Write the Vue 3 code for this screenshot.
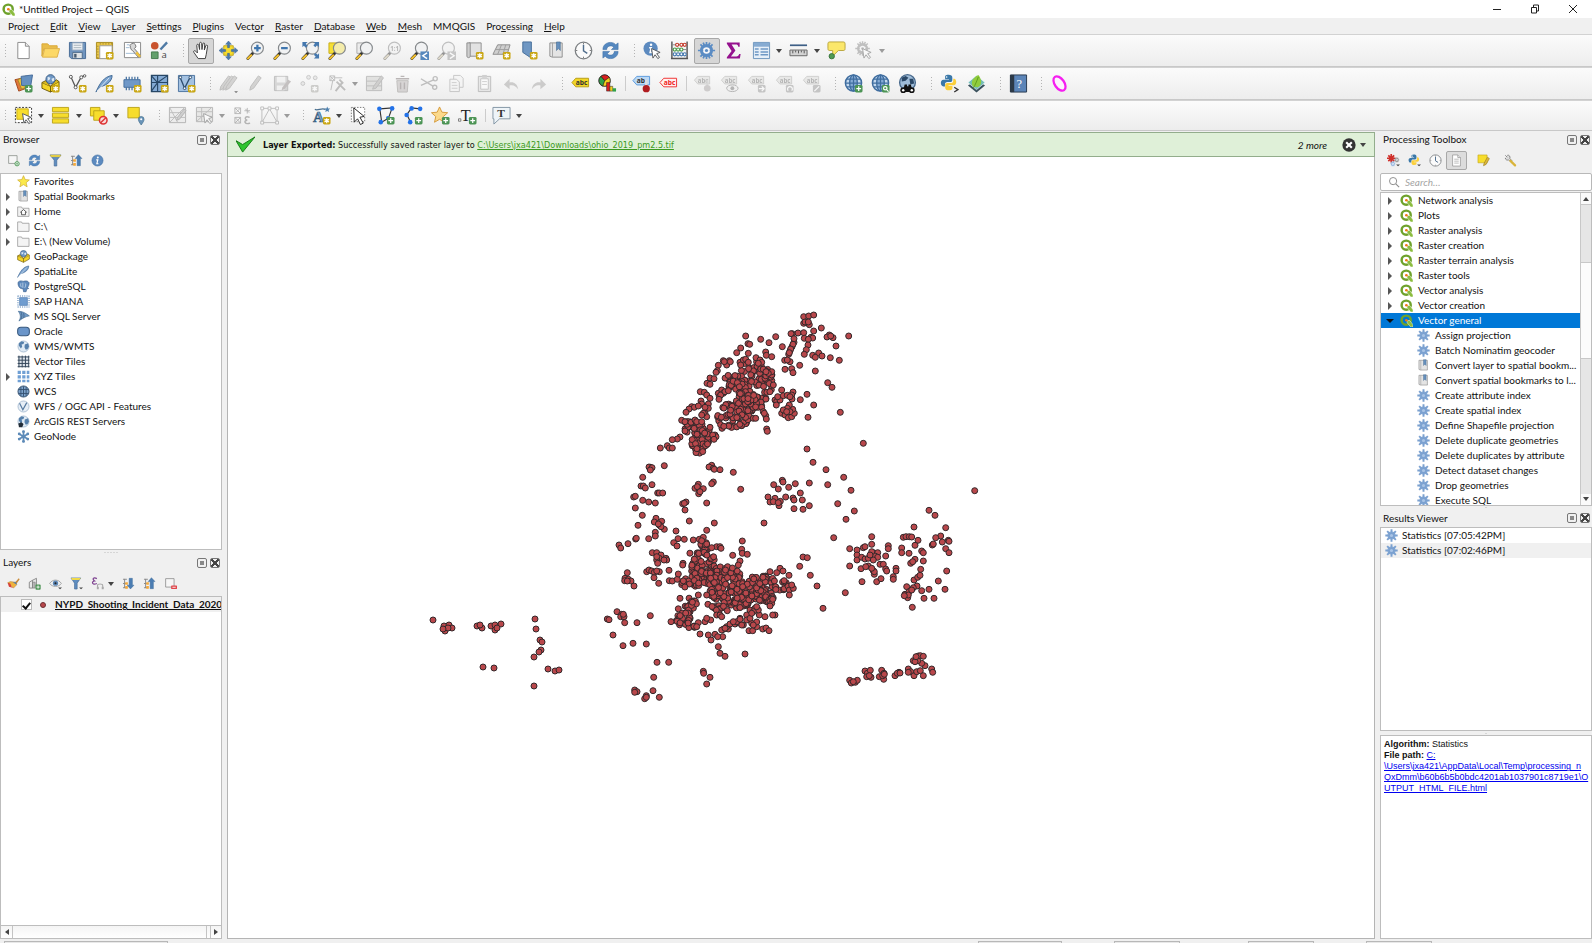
<script setup>
import { ref } from 'vue'

const badge = (fill, mark) =>
  `<g transform="translate(11 11)"><rect x=".5" y=".5" width="8" height="8" rx="1.5" fill="${fill}"/><path d="${mark}" stroke="#fff" stroke-width="1.3" fill="none"/></g>`
const star = badge('#c9a613', 'M4.5 1.8v5.4M2.1 3.1l4.8 2.8M6.9 3.1L2.1 5.9')
const plus = badge('#4c9455', 'M4.5 2v5M2 4.5h5')
const lens = (inner = '', glass = '#f1f2f3') =>
  `<path d="M7.5 12.5L2 18.5" stroke="#333" stroke-width="3" stroke-linecap="round"/><path d="M5.5 15L2 18.5" stroke="#f0bd2c" stroke-width="2.2" stroke-linecap="round"/><circle cx="12" cy="7.5" r="6.3" fill="${glass}" stroke="#85898c" stroke-width="1.2"/>${inner}`
const gear = (c, x = 10, y = 10, s = 1) =>
  `<g transform="translate(${x} ${y}) scale(${s})"><circle r="5.4" fill="none" stroke="${c}" stroke-width="3"/><path d="M0-9V9M-9 0H9M-6.4-6.4L6.4 6.4M6.4-6.4L-6.4 6.4M-3.5-8.3L3.5 8.3M3.5-8.3L-3.5 8.3" stroke="${c}" stroke-width="1.8"/><circle r="3.4" fill="#f4f6fa"/><circle r="1.7" fill="${c}"/></g>`
const cursor = '<path d="M9 8l9 4-3.6 1.3 3 4-1.8 1.2-2.9-4L10.500 18z" fill="#fff" stroke="#55595c" stroke-width="1"/>'
const page = '<path d="M4 1.500h8l4 4v13H4z" fill="#fff" stroke="#8a8a8a"/><path d="M12 1.500v4h4" fill="#eee" stroke="#8a8a8a"/>'
const python = '<path d="M10 1c-4 0-4 1.500-4 3v2h4.500v.8H4C2 6.800 1 8.500 1 10.500s1 4 3 4h1.800v-2.400c0-1.600 1-2.700 2.700-2.700H12c1.500 0 2.400-1 2.400-2.400V4c0-2-1.500-3-4.400-3z" fill="#3a78a8"/><path d="M10.500 19c4 0 4-1.500 4-3v-2H10v-.8h6c2 0 3-1.700 3-3.700s-1-4-2.500-4h-1v2.300c0 1.600-1 2.700-2.700 2.700H8.500c-1.500 0-2.400 1-2.400 2.400V16c0 2 1.500 3 4.400 3z" fill="#fbcf3a"/><circle cx="7.800" cy="3.600" r=".9" fill="#fff"/>'
const globe = (c = '#3f6d9f') =>
  `<circle cx="10" cy="9.500" r="8.500" fill="#c3d8ee" stroke="${c}" stroke-width="1.600"/><ellipse cx="10" cy="9.500" rx="4" ry="8.500" fill="#86acd6" stroke="${c}" stroke-width="1.400"/><path d="M1.500 9.500h17M2.800 5.500h14.400M2.800 13.500h14.400M10 1v17" stroke="${c}" stroke-width="1.300"/>`
const land = '<circle cx="10" cy="10" r="8.500" fill="#dfeaf4" stroke="#8fa9c2"/><path d="M3 5l4-3 4 1-1 3-3 1 1 3-2 3-3-4zM12 7l5-2 1.500 5-2 4-3 1-2-4z" fill="#5680ab"/>'
const tag = (text, bg, line, fg) =>
  `<path d="M5 4.500h13.500v9H5l-4-4.500z" fill="${bg}" stroke="${line}"/><text x="5" y="11.500" font-family="Open Sans, sans-serif" font-size="7" font-weight="700" fill="${fg}">${text}</text>`
const fadedTag = '<path d="M5 2.500h12.500v8H5L1.500 6.500z" fill="#dcdccf" stroke="#aaaa9f"/><text x="5" y="9" font-family="Open Sans, sans-serif" font-size="6.500" font-weight="700" fill="#777">abc</text>'
const book = '<path d="M3 2h13v15H5.500L3 16z" fill="#e4e4e4" stroke="#8f8f8f"/><path d="M5.800 2v15" stroke="#a5a5a5"/>'
const pencil = (dx = 0) => `<path d="M${4 + dx} 17l1-4 8-11 3 2-8 11z" fill="#b5b2a8" stroke="#8d8a84"/>`
const boxPkg = '<path d="M1 9l9 4 9-5v6l-9 5-9-4z" fill="#f4d426" stroke="#6f5b0c"/><path d="M10 13v6M1 9l4-2 5 6M19 8l-3-2-6 7" fill="#d8b91f" stroke="#6f5b0c"/><circle cx="10" cy="5.500" r="4.800" fill="#6f97c4" stroke="#395d86"/><path d="M7 3l3 1-1 2-2 1zM11 5l3-1 0 3-2 1z" fill="#dce8f4"/>'
const feather = '<path d="M1 19C5 10 9 3 18 1.500c0 6-5 10-12.500 12z" fill="#7aa2cf" stroke="#3f6894"/><path d="M2 18L15 4" stroke="#dce9f5"/>'
const qlogo = '<circle cx="9.500" cy="9.500" r="7" fill="none" stroke="#6fa22c" stroke-width="3.800"/><path d="M11 10h4l5 6.500V20h-3.500L11 13.500z" fill="#8cbd3f" stroke="#fff" stroke-width=".7"/><circle cx="9.800" cy="9.600" r="2.100" fill="#ee7913"/>'
const redo = '<path d="M3 16c1-6 5-8 9-7V5l6 6-6 5v-4c-4-1-7 1-9 4z" fill="#a9a49c"/>'
const bars = '<path d="M1.500 3.500h6M1.500 10h6M1.500 16.500h6M4 3v14" stroke="#8a8a8a" stroke-width="1.500"/><path d="M5 8h4v4H5zM5 14h4v4H5z" fill="#f5a93a"/>'

const icons = {
  qgis: qlogo,
  new: page,
  open: '<path d="M1 3h6l2 2h8v3H3l-2 8z" fill="#e9bd4a" stroke="#d9a838"/><path d="M4 8h15.500L17 17H1.500z" fill="#fcd867" stroke="#ddb048"/>',
  save: '<path d="M1.500 1.500h17v17h-15l-2-2z" fill="#6f94bf" stroke="#486c96"/><path d="M4.500 2h11v7.500h-11z" fill="#eef1f4" stroke="#9fb0c2"/><path d="M6 4.500h8M6 7h8" stroke="#a8b3bd"/><path d="M5 12h10v6.500H5z" fill="#dfe3e6" stroke="#4d6a8a"/><path d="M6.500 13.500h2.500v4h-2.500z" fill="#475b70"/>',
  layout: '<path d="M1.500 1.500h17v17h-17z" fill="#e8c548" stroke="#a88a1f"/><path d="M5 5h13v13.500H5z" fill="#fff" stroke="#9c9c9c"/><path d="M3 5v13M5 3h13" stroke="#8c7420" stroke-dasharray="1 2"/>' + star,
  manager: '<path d="M1.500 1.500h17v16h-17z" fill="#fff" stroke="#888"/><path d="M3 13h12M4 4h3M3 7h4" stroke="#9db9d4"/><path d="M8 7a3 3 0 1 1 4 1l6 7-2 2-6-7a3 3 0 0 1-2-3z" fill="#d8d8d8" stroke="#777"/><path d="M14 12l4 4.500" stroke="#f0c23a" stroke-width="2.500"/>',
  style: '<circle cx="5" cy="5" r="4" fill="#c9532d"/><path d="M11 9l7-7.500" stroke="#4f7aa5" stroke-width="2.500"/><path d="M1.500 11.500h7v7h-7z" fill="#62a06b" stroke="#447a4d"/><text x="12" y="18" font-family="Open Sans, sans-serif" font-size="10" fill="#444">a</text>',
  hand: '<path d="M6.500 18.500L2 12c-1-1.500.8-2.500 2-1.200l1.700 1.800L5 4.500c0-1.400 1.900-1.400 2.100 0L8 9V2.500c0-1.500 2-1.500 2.100 0L10.500 9l.9-6c.2-1.300 2-1.200 2 .2L13 9.500l1.500-4.500c.5-1.200 2.100-.8 1.900.5L15 14l-1 4.500z" fill="#fff" stroke="#3c3c3c"/>',
  pan: '<path d="M5 5h10v10H5z" fill="#f6dc2e" stroke="#c0a51a"/><path d="M10 0l3 3.500h-2v3.500H9V3.500H7zM10 20l3-3.500h-2V13H9v3.500H7zM0 10l3.500-3v2H7v2H3.500v2zM20 10l-3.500-3v2H13v2h3.500v2z" fill="#4b7bb0" stroke="#34608f" stroke-width=".5"/>',
  zin: lens('<path d="M12 4v7M8.500 7.500h7" stroke="#3f76ae" stroke-width="2.400"/>'),
  zout: lens('<path d="M8.500 7.500h7" stroke="#3f76ae" stroke-width="2.400"/>'),
  full: lens() + '<path d="M1.500 1h5.500l-2 2 2 2-2 2-2-2-1.500 1.500zM19 1v5.500l-2-2-2 2-2-2 2-2L13.500 1zM19 18.500h-5.500l2-2-2-2 2-2 2 2 1.500-1.500z" fill="#4578ae"/>',
  zsel: '<path d="M1 2h12v11H1z" fill="#f6df33" stroke="#c7ad1b"/>' + lens('', '#f4ecaa'),
  zlay: '<path d="M2 2h11v11H2z" fill="#ececec" stroke="#aaa"/>' + lens(),
  znat: lens('<text x="7.500" y="10" font-family="Open Sans, sans-serif" font-size="6.500" font-weight="700" fill="#777">1:1</text>'),
  zlast: lens() + '<rect x="11" y="11" width="9" height="9" fill="#5688bd"/><path d="M18 12.500l-4.500 3 4.500 3" stroke="#fff" stroke-width="1.500" fill="none"/>',
  znext: lens() + '<rect x="11" y="11" width="9" height="9" fill="#9a9a9a"/><path d="M13.500 12.500l4.500 3-4.500 3" stroke="#fff" stroke-width="1.500" fill="none"/>',
  map: '<path d="M4 2h13v14H4z" fill="#e2e2e2" stroke="#8d8d8d"/><path d="M2 2h3.500v14c0 2-3.500 2-3.500 0z" fill="#cfcfcf" stroke="#8d8d8d"/>' + star,
  map3d: '<path d="M6 4h13l-3 10H1z" fill="#cfcfcf" stroke="#8d8d8d"/><path d="M4 9h13M10 4L6 14M14.500 4l-3 10" stroke="#9d9d9d" fill="none"/>' + star,
  bookmark: '<path d="M4 1h9v17l-4.500-3L4 12z" fill="#6f97c3" stroke="#436d99"/>' + star,
  bookmarks: book + '<path d="M10 1h4v9l-2-2-2 2z" fill="#6690bd" stroke="#41698f" stroke-width=".6"/>',
  clock: '<circle cx="10" cy="10" r="8.700" fill="#fbfbfb" stroke="#7b7f82" stroke-width="1.300"/><path d="M10 4v6.500l4 2.500" stroke="#4f6d8c" stroke-width="1.500" fill="none"/><path d="M10 2v1.500M10 16.500V18M2 10h1.500M16.500 10H18" stroke="#777"/>',
  refresh: '<path d="M2 9C2 4 6 1.500 10 1.500c2.500 0 4.500 1 5.500 2.500L18 2v7h-7l2.500-2.500C11 4 6 5 6 9zM18 11c0 5-4 7.500-8 7.500-2.500 0-4.500-1-5.500-2.500L2 18v-7h7l-2.500 2.500C9 16 14 15 14 11z" fill="#5588c0" stroke="#3c6da5" stroke-width=".6"/>',
  info: '<circle cx="8" cy="8" r="7.500" fill="#5c8abf"/><circle cx="8.500" cy="4" r="1.300" fill="#fff"/><path d="M6.500 7h2.200L7.500 12h2" stroke="#fff" stroke-width="1.600" fill="none"/>' + cursor,
  infoOnly: '<circle cx="10" cy="10" r="8.500" fill="#5c8abf" stroke="#4472a5"/><circle cx="10.500" cy="5.500" r="1.500" fill="#fff"/><path d="M8 9h2.500L9 15h2.500" stroke="#fff" stroke-width="1.800" fill="none"/>',
  abacus: '<path d="M2 .5v18M18 .5v18M1 18.500h18" stroke="#555" stroke-width="1.500"/><path d="M2 4h16M2 9h16M2 14h16" stroke="#888"/><g fill="#fff" stroke-width="1.200"><g stroke="#c33b2c"><circle cx="7.500" cy="4" r="1.600"/><circle cx="12" cy="4" r="1.600"/><circle cx="15.500" cy="4" r="1.600"/></g><g stroke="#4c9c4a"><circle cx="5" cy="9" r="1.600"/><circle cx="8.500" cy="9" r="1.600"/><circle cx="12" cy="9" r="1.600"/></g><g stroke="#4478ae"><circle cx="5" cy="14" r="1.600"/><circle cx="8.500" cy="14" r="1.600"/><circle cx="12" cy="14" r="1.600"/><circle cx="15.500" cy="14" r="1.600"/></g></g>',
  gear: gear('#5b8cc4'),
  algo: '<circle cx="10" cy="10" r="6.300" fill="#8aadda"/><path d="M10 .5v19M.5 10h19M3.300 3.300l13.400 13.400M16.700 3.300L3.300 16.700" stroke="#7ba1d0" stroke-width="3"/><circle cx="10" cy="10" r="2.400" fill="#a9c4e6"/>',
  sigma: '<path d="M3 1.500h13.500V6h-1.500c-.3-1.700-1-2.200-2.500-2.200H8L12 10l-4.700 6.200H13c1.700 0 2.500-.7 3-2.500h1.500l-.8 4.800H3V17l5-6.600L3 3z" fill="#95118e"/>',
  table: '<path d="M1.500 1.500h17v17h-17z" fill="#e6eff8" stroke="#6b93bd"/><path d="M2 2h16v4H2z" fill="#86abd2"/><path d="M3 8.500h4M3 11.500h4M3 14.500h4M9 8.500h8M9 11.500h8M9 14.500h8" stroke="#6f99c5" stroke-width="1.500"/>',
  ruler: '<path d="M1 4.500h18" stroke="#3e5f86" stroke-width="1.800"/><path d="M1 9.500h18v6H1z" fill="#d3d3d3" stroke="#666"/><path d="M4 10v3M7 10v2M10 10v3M13 10v2M16 10v3" stroke="#555"/>',
  tip: '<path d="M3 1h14c1.500 0 2 .5 2 2v5c0 1.500-.5 2-2 2h-5l-6 6v-6H3c-1.500 0-2-.5-2-2V3c0-1.500.5-2 2-2z" fill="#fbe76b" stroke="#b9a53d"/><circle cx="5" cy="16" r="2.800" fill="#4f9a53" stroke="#39743d"/>',
  actions: gear('#8a8a8a', 9, 8, 0.85) + cursor,
  source: '<path d="M1 6l9-2 3 11-8 3z" fill="#e0763a" stroke="#a1461b"/><path d="M4 6l9-4 4 10-9 4z" fill="#edc13b" stroke="#a8862a"/><path d="M7.500 2.500l12-1.500-2 12-9.500-1z" fill="#6590c0" stroke="#42699a"/>' + plus,
  gpkg: boxPkg + star, box: boxPkg,
  shape: '<path d="M3 3l5 11L14 3l3-1" stroke="#555" stroke-width="1.300" fill="none"/><g fill="#fff" stroke="#555"><circle cx="3" cy="3" r="1.600"/><circle cx="14" cy="3.500" r="1.600"/><circle cx="17.500" cy="2" r="1.300"/><circle cx="8" cy="14" r="1.600"/></g>' + star,
  spatial: feather + star, feather,
  memory: '<path d="M1 6h17v8H1z" fill="#6f98c8" stroke="#44709f"/><path d="M3.500 3v3M6.500 3v3M9.500 3v3M12.500 3v3M15.500 3v3M3.500 14v3M6.500 14v3M9.500 14v3" stroke="#44709f" stroke-width="1.300"/>' + star,
  mesh: '<path d="M1.500 1.500h17v17h-17z" fill="#84aad4" stroke="#284766" stroke-width="1.300"/><path d="M8 1.500v17M1.500 9h17M8 9l10-7M1.500 18L8 9M1.500 2L8 9" stroke="#284766" stroke-width="1.200" fill="none"/>' + star,
  virtual: '<path d="M1.500 1.500h17v17h-17z" fill="#a4c2e2" stroke="#4c739f"/><path d="M3 3l5 12L14 3" stroke="#2e4e70" stroke-width="1.400" fill="none"/><g fill="#fff" stroke="#2e4e70"><circle cx="3.500" cy="3.500" r="1.400"/><circle cx="14" cy="3.500" r="1.400"/><circle cx="8" cy="15" r="1.400"/></g>' + star,
  pencils: pencil(-3) + pencil(0) + pencil(3) + '<path d="M16 18h4l-2 2.500z" fill="#333"/>',
  pencil: pencil(),
  saveEdit: '<path d="M1.500 2.500h14v15h-14z" fill="#b9b9b9" stroke="#888"/><path d="M4 3h9v6H4zM4 12h8v5H4z" fill="#eee"/><path d="M9 17l1-3 6-8 3 2-7 8z" fill="#a88"/>',
  points: '<g fill="#ddd" stroke="#999"><circle cx="3" cy="10" r="2"/><circle cx="9" cy="3.500" r="2"/><circle cx="16" cy="4" r="2"/></g>' + badge('#aaa890', 'M4.500 1.800v5.400M2.100 3.100l4.800 2.800M6.900 3.100L2.100 5.900'),
  vertex: '<path d="M2 2h5v5H2zM2 2l5 5M7 2L2 7M7 4h8M5 7L3 17" stroke="#888" fill="none"/><path d="M8 18l7-9M9 8l9 9M12 6l4 4" stroke="#8d8a84" stroke-width="2"/>',
  modify: '<path d="M1.500 2.500h16v15h-16z" fill="#ccd0c0" stroke="#888"/><path d="M1.500 7.500h16M1.500 12.500h16" stroke="#888"/><path d="M8 16l1-3 8-11 2.500 2-8 11z" fill="#b2aa9e" stroke="#888"/>',
  trash: '<path d="M4 7h12l-1 12H5z" fill="#cdb4b4" stroke="#987"/><path d="M3 5h14M8 2.500h4M8 9v7M12 9v7" stroke="#976f6f" stroke-width="1.500"/>',
  cut: '<path d="M1 5l13 8M1 12L15 6" stroke="#888" stroke-width="1.500"/><circle cx="16" cy="5" r="2.200" fill="none" stroke="#888" stroke-width="1.400"/><circle cx="15.500" cy="14" r="2.200" fill="none" stroke="#888" stroke-width="1.400"/>',
  copy: '<path d="M7 1.500h7l3 3V14H7z" fill="#f4f4f4" stroke="#999"/><path d="M3 5.500h7l3 3v10H3z" fill="#f4f4f4" stroke="#999"/><path d="M5 9h5M5 12h6M5 15h6" stroke="#aaa"/>',
  paste: '<path d="M3.500 2.500h13v16h-13z" fill="#ddd" stroke="#888"/><path d="M6 5h8v11H6z" fill="#fff" stroke="#999"/><path d="M7.500 1h5v3h-5z" fill="#aaa"/><path d="M7.500 8h5M7.500 11h5" stroke="#aaa"/>',
  undo: `<g transform="translate(20 0) scale(-1 1)">${redo}</g>`, redo,
  label: tag('abc', '#f2d626', '#b79d16', '#333'),
  diagram: '<circle cx="7" cy="7" r="6" fill="#f1cf1d" stroke="#222"/><path d="M7 7L3 2.500A6 6 0 0 1 12 3.500z" fill="#d92020" stroke="#222" stroke-width=".7"/><path d="M7 7L3 2.500a6 6 0 0 0 2 10.200z" fill="#31a24a" stroke="#222" stroke-width=".7"/><path d="M9 9h3.500v9H9z" fill="#d92020" stroke="#222" stroke-width=".5"/><path d="M12.500 13h3v5h-3z" fill="#f1cf1d" stroke="#222" stroke-width=".5"/><path d="M15.500 15h3.500v3.500h-3.500z" fill="#31a24a"/>',
  pinLabel: '<path d="M5 2.500h13.500v9H5L1 7z" fill="#bcd9f5" stroke="#5a9add"/><text x="5" y="9.500" font-family="Open Sans, sans-serif" font-size="7" font-weight="700" fill="#333">ab</text><path d="M15 6v7" stroke="#ddd" stroke-width="2.500"/><circle cx="15" cy="15.500" r="3.800" fill="#b01c20"/>',
  redLabel: tag('abc', '#fff0f0', '#f03030', '#f02020'),
  fl1: fadedTag + '<path d="M15 6v7" stroke="#bbb" stroke-width="2"/><circle cx="15" cy="15" r="3.500" fill="#b9a5a5"/>',
  fl2: fadedTag + '<ellipse cx="13" cy="15" rx="6" ry="3.500" fill="#eee" stroke="#777"/><circle cx="13" cy="15" r="2" fill="#777"/>',
  fl3: fadedTag + badge('#999', 'M1.500 4.500h5M4.500 2l2.500 2.500L4.500 7'),
  fl4: fadedTag + badge('#999', 'M3 6.500a2.500 2.500 0 1 1 3.500 0'),
  fl5: fadedTag + badge('#999', 'M2 7l5-5'),
  web1: globe() + plus, web2: globe() + badge('#4c9455', 'M4 4m-1.800 0a1.800 1.800 0 1 0 3.600 0a1.800 1.800 0 1 0-3.600 0M5.500 5.500L7.500 7.500'),
  bino: '<circle cx="10" cy="9" r="8.300" fill="#9fbcd8" stroke="#47688b" stroke-width="1.400"/><path d="M4 4l4-2 3 2-3 3-4 1zM12 5l4 0 1 5-4 1z" fill="#2b4867"/><path d="M5 19l2-8h2.500v2h1.500v-2h2.500l2 8z" fill="#111"/><circle cx="5.500" cy="17" r="3" fill="#111"/><circle cx="14.500" cy="17" r="3" fill="#111"/><circle cx="5.500" cy="17" r="1.300" fill="#fff"/><circle cx="14.500" cy="17" r="1.300" fill="#fff"/>',
  python: `<g transform="scale(.9)">${python}</g><path d="M15 14l4 2.500-4 2.500" stroke="#333" stroke-width="1.400" fill="none"/>`,
  leaf: '<path d="M1 12l9 7.500 9-7.500-9-6z" fill="#39505c"/><path d="M1 9l9 7.500L19 9l-9-7.500z" fill="#73bdb9" stroke="#fff" stroke-width=".6"/><path d="M6 13C3 7 8 3 12 1c4 5 4 11-1 13z" fill="#90cc3c"/><path d="M6.500 15C9 11 10 8 12 3" stroke="#5f9a1d" fill="none"/>',
  help: '<path d="M1.500 1h17v18h-17z" fill="#5c85b8" stroke="#28394d"/><path d="M1 1h4.500v18H1z" fill="#2c3947"/><text x="8" y="14.500" font-family="Liberation Serif, serif" font-size="13" fill="#fff">?</text>',
  ellipse: '<ellipse cx="10" cy="10" rx="5" ry="8.500" transform="rotate(-35 10 10)" fill="#fdf2fd" stroke="#f51ff0" stroke-width="2.400"/>',
  select: '<path d="M1.500 1.500h17v16h-17z" fill="#fff" stroke="#333" stroke-dasharray="2 1.500"/><path d="M3 3h12v11H3z" fill="#f7dd2c" stroke="#c7ad1b"/>' + cursor,
  rows: '<g fill="#f7dd2c" stroke="#bda41c"><path d="M1.500 1.500h17v4.500h-17zM1.500 7.500h17v4.500h-17zM1.500 13.500h17v4.500h-17z"/></g>',
  deselect: '<path d="M1.500 1.500h10v9h-10z" fill="#f7dd2c" stroke="#bda41c"/><path d="M5 5h11v10H5z" fill="#f7dd2c" stroke="#bda41c"/><circle cx="15" cy="15" r="4" fill="#f8dada" stroke="#d33" stroke-width="1.600"/><path d="M12 18l6-6" stroke="#d33" stroke-width="1.500"/>',
  selLoc: '<path d="M2 1.500h12v11H2z" fill="#f7dd2c" stroke="#bda41c"/><path d="M16 20c-2-3-3-4-3-6a3 3 0 0 1 6 0c0 2-1 3-3 6z" fill="#6a94b8" stroke="#45718f" stroke-width=".7"/><circle cx="16" cy="14" r="1.100" fill="#fff"/>',
  e1: '<path d="M1.500 1.500h17v16h-17z" fill="#e8e8e8" stroke="#777"/><path d="M1.500 7h17M1.500 12h17M2 2l8 15M2 17L17 2" stroke="#888" fill="none"/><path d="M9 15l1-3 7-9 2 2-7 9z" fill="#aaa" stroke="#777"/>',
  e2: '<path d="M1.500 1.500h17v15h-17z" fill="#dcdccf" stroke="#777"/><path d="M1.500 6h17M1.500 11h17M2 16L17 2M7 2v14" stroke="#888" fill="none"/>' + cursor,
  e3: '<path d="M2 2h6v6H2zM2 2l6 6M8 2L2 8M12 5h6M15 2v6M13 3l4 4M2 12h6v6H2zM2 12l6 6M8 12l-6 6" stroke="#777" fill="none"/><path d="M17.500 12c-5-2-6 2-2.500 3-4 0-3 5 3 3" stroke="#777" stroke-width="1.500" fill="none"/>',
  e4: '<path d="M2 2.500h16M2 2.500v15h16v-15M2 17.500L10 3l8 14" stroke="#888" fill="none"/><g fill="#fff" stroke="#888"><path d="M.8 1h3v3h-3zM16.500 1h3v3h-3zM.8 16h3v3h-3zM16.500 16h3v3h-3zM8.500 1h3v3h-3z"/></g>',
  anno: '<text x="1" y="17" font-family="Liberation Serif, serif" font-size="16" font-weight="700" fill="#7ba4c8" stroke="#2c5375" stroke-width=".7">A</text><path d="M3 3.500c3 2 7-2 11 0" stroke="#4b7090" fill="none" stroke-width="1.300"/><path d="M16 .5l1 2 2.200.2-1.700 1.500.5 2.200-2-1.200-2 1.200.5-2.200L13 2.700l2.200-.2z" fill="#4f82b0"/>' + star,
  selAnno: '<path d="M2.500 1.500h14v15h-14z" fill="#fff" stroke="#777" stroke-dasharray="1.500 1.500"/><path d="M5 2l11 9-4.500.8L15 18l-3 1.500-3-6L5.500 17z" fill="#fff" stroke="#222"/>',
  poly: '<path d="M4 3l13-1-4 11-7 4z" stroke="#333" fill="none" stroke-width="1.200"/><g fill="#2372e8"><circle cx="3.500" cy="3" r="2.400"/><circle cx="17" cy="2.500" r="2.400"/><circle cx="5" cy="17" r="2.400"/><circle cx="12.500" cy="12.500" r="2"/></g>' + plus,
  line: '<path d="M17 3L8 2 3 9l4 8" stroke="#333" fill="none" stroke-width="1.200"/><g fill="#2372e8"><circle cx="17" cy="3" r="2.400"/><circle cx="8" cy="2.500" r="2.400"/><circle cx="2.800" cy="9.500" r="2.400"/><circle cx="6.500" cy="17" r="2.400"/></g>' + plus,
  starPlus: '<path d="M9 1l2.500 5.500 6 .6-4.500 4 1.300 6L9 14l-5.300 3.100 1.300-6-4.500-4 6-.6z" fill="#fbd98b" stroke="#d59a3a"/>' + plus,
  textPlus: '<text x="3" y="16" font-family="Liberation Serif, serif" font-size="17" fill="#222">T</text><path d="M.5 13.500h2.500v2.500H.5z" fill="#fff" stroke="#777"/>' + plus,
  balloon: '<path d="M1 1.500h18v12H8L2 19v-5.500H1z" fill="#eef4f8" stroke="#8295a3"/><text x="5.500" y="12" font-family="Liberation Serif, serif" font-size="12" font-weight="700" fill="#333">T</text>',
  addLayer: '<path d="M2.500 2.500h13v12h-13z" fill="#f6f6f6" stroke="#8a8f8a" stroke-width="1.200"/><circle cx="15.500" cy="15" r="3.300" fill="#fff" stroke="#4f9a58" stroke-width="1.500"/><path d="M13.500 15h4M15.500 13v4" stroke="#4f9a58"/>',
  filter: '<path d="M1.500 1.500h17l-6.500 8v9h-4v-9z" fill="#5f8dc0" stroke="#446b96"/><path d="M1.500 1.500h17l-2 3h-13z" fill="#f0d94a" stroke="#a89a3a" stroke-width=".6"/>',
  collapse: bars + '<path d="M13 1l5.500 6H16v11h-5V7H8z" fill="#4b7db3" stroke="#32608f" stroke-width=".6"/>',
  expand: bars + '<path d="M13 18.500l5.500-6H16V2h-5v10.500H8z" fill="#4b7db3" stroke="#32608f" stroke-width=".6"/>',
  fav: '<path d="M10 1l2.600 6 6.400.6-4.900 4.200 1.500 6.400L10 14.800l-5.600 3.400 1.500-6.400L1 7.600 7.400 7z" fill="#fbe94b" stroke="#c9a52a"/>',
  home: '<path d="M1 3h6l1 2h10.500v12.500H1z" fill="#f2f2f2" stroke="#888"/><path d="M10 7l-4.500 4H7v4h6v-4h1.500z" fill="#fff" stroke="#333" stroke-width="1.200"/>',
  folder: '<path d="M1 3h6l1 2h10.500v12.500H1z" fill="#f4f4f4" stroke="#999" stroke-width="1.200"/>',
  pg: '<path d="M2 3c3-3 6-1 8-1 3-1 7-1 8.500 2 .5 3-1 6-2.500 8l2 1-3 1-1 4h-4l-.5-5-2 1-1-1c-3 0-6-6-4.500-10z" fill="#5e8abd" stroke="#375f8e"/><path d="M9 4v8M12 5c2 1 2 3 0 7M6 5c-1 3 0 5 1 6" stroke="#dce8f4" fill="none"/>',
  sap: '<path d="M4 4h12v12H4z" fill="#6f9ccf" stroke="#4a79ae"/><path d="M1 1.500h18M1 18.500h18M1.500 1v18M18.500 1v18" stroke="#4a79ae" stroke-width="1.600" stroke-dasharray="1.600 1.800"/>',
  ms: '<path d="M2 2c6 0 10 2 17 7-6 1-11 4-16 8 3-5 3-10-1-15z" fill="#7099c5" stroke="#41698f"/><path d="M6 3c2 3 2 8 0 11M10 5c1 3 1 5 0 7" stroke="#2f5378" fill="none"/>',
  oracle: '<rect x="1" y="3.500" width="18" height="13" rx="5" fill="#6a95c9" stroke="#37587e" stroke-width="1.600"/>',
  wms: land,
  vt: '<path d="M2 2h16v16H2z" fill="#dde3ea"/><path d="M3 1v18M8 1v18M13 1v18M18 1v18M1 3h18M1 8h18M1 13h18M1 18h18" stroke="#34465a" stroke-width="1.500"/>',
  xyz: '<g fill="#6f9fd4"><path d="M1 1h5v5H1zM8 1h5v5H8zM15 1h4v5h-4zM1 8h5v5H1zM8 8h5v5H8zM15 8h4v5h-4zM1 15h5v4H1zM8 15h5v4H8zM15 15h4v4h-4z"/></g>',
  wcs: '<circle cx="10" cy="10" r="8.500" fill="#7fa5cd" stroke="#34506e" stroke-width="1.500"/><path d="M2 7h16M2 13h16M10 2v16M6 3v14M14 3v14" stroke="#34506e" stroke-width="1.400"/>',
  wfs: '<circle cx="10" cy="10" r="8.500" fill="#e6eef6" stroke="#8fa9c2"/><path d="M4 5l5 10 6-11" stroke="#55799f" stroke-width="1.800" fill="none"/>',
  arc: land + '<path d="M2 13l5-2 3 3-2 5H3z" fill="#222d38"/>',
  geonode: '<path d="M10 1v18M2 5.500l16 9M18 5.500l-16 9" stroke="#5d8ab8" stroke-width="2.600"/><g fill="#5d8ab8"><circle cx="10" cy="2.500" r="2.200"/><circle cx="10" cy="17.500" r="2.200"/><circle cx="3.500" cy="6" r="2.200"/><circle cx="16.500" cy="6" r="2.200"/><circle cx="3.500" cy="14" r="2.200"/><circle cx="16.500" cy="14" r="2.200"/><circle cx="10" cy="10" r="3"/></g>',
  brush: '<path d="M12 9l6-7 1.500 1.500L14 11z" fill="#c98b3a"/><path d="M1 9l4-2 9 1 1 4-5 5z" fill="#f0b23c" stroke="#a3702a" stroke-width=".6"/><path d="M1 9l4 1 2 5 3 2-7-2z" fill="#d4403a"/><path d="M9 8l5 0 1 4z" fill="#4b7db3"/>',
  group: '<path d="M2 8l5-3v12H2zM7 5l6-3v15" fill="#e8e8e8" stroke="#777" stroke-width="1.200"/><path d="M7 8h4v9H7z" fill="#bbb" stroke="#777"/>' + plus,
  eye: '<path d="M1 10c4-7 14-7 18 0-4 6-14 6-18 0z" fill="#eef0f2" stroke="#9a9a9a" stroke-width="1.300"/><circle cx="10" cy="9.500" r="4" fill="#5c86b5"/><circle cx="10" cy="9.500" r="1.600" fill="#222"/><path d="M14 16h6l-3 3z" fill="#444"/>',
  filterDrop: '<path d="M1.500 1.500h15l-5.500 8v9H7v-9z" fill="#5f8dc0" stroke="#446b96"/><path d="M1.500 1.500h15l-2 3h-11z" fill="#f0d94a"/><path d="M14 16h6l-3 3z" fill="#444"/>',
  eps: '<path d="M9 2.500C4-.5 1 3.500 5.500 6 0 7 2 13 9 10" stroke="#7c3f8f" stroke-width="1.800" fill="none"/><path d="M10 18v-5c0-3 8-3 8 0v5" fill="none" stroke="#aaa" stroke-width="1.600"/><path d="M9 15h3v4H9zM16.500 15h3v4h-3z" fill="#aaa"/>',
  remove: '<path d="M2.500 2.500h13v13h-13z" fill="#f6f6f6" stroke="#8a8a8a" stroke-width="1.200"/><rect x="11" y="13" width="9" height="5.500" rx="1" fill="#e0474c"/><path d="M13 15.800h5" stroke="#fff" stroke-width="1.300"/>',
  models: '<g stroke="#cf2f2a" stroke-width="2.600"><path d="M6.500 0v13M0 6.500h13M2 2l9 9M11 2l-9 9"/></g><circle cx="6.500" cy="6.500" r="3.500" fill="#cf2f2a"/>' + gear('#8d8d8d', 15, 9, 0.45) + gear('#8db1dd', 9, 15, 0.45) + '<path d="M14 16h6l-3 3z" fill="#444"/>',
  scripts: `<g transform="scale(.9)">${python}</g><path d="M14 16h6l-3 3z" fill="#444"/>`,
  results: page + '<path d="M6.500 8h7M6.500 11h7M6.500 14h7" stroke="#999"/>',
  editIn: '<path d="M1.500 1.500h14v12h-14z" fill="#f7dd2c" stroke="#c4a91b"/><path d="M10 18l1-4 5-9 3 2-5 9z" fill="#dcb83a" stroke="#9a7f25"/>',
  wrench: '<path d="M2 2l3 3M2 6c0 3 3 4 5 3l3 3 2-2-3-3c1-3-1-6-4-5" fill="#ddd" stroke="#777" stroke-width="1.300"/><path d="M10 10.500l7 7" stroke="#d9b43a" stroke-width="3.500" stroke-linecap="round"/>',
  search: '<circle cx="8.500" cy="8.500" r="6" fill="none" stroke="#8b8b8b" stroke-width="1.600"/><path d="M13 13l5.500 5.500" stroke="#8b8b8b" stroke-width="1.800"/>',
  check: '<path d="M0 6l7 4L20 2 7 18z" fill="#2fc42f" stroke="#157a15"/>',
  close: '<circle cx="10" cy="10" r="9.500" fill="#333"/><path d="M6 6l8 8M14 6l-8 8" stroke="#fff" stroke-width="3"/>',
}

// Each tool is "icon[:flags] label"; flags: d = drop-down arrow, x = disabled, p = pressed.
const parse = (text) =>
  text.split('|').map((part) => {
    const [head, ...label] = part.trim().split(' ')
    const [icon, flags = ''] = head.split(':')
    return { icon, label: label.join(' '), drop: flags.includes('d'), off: flags.includes('x'), on: flags.includes('p') }
  })
const group = (lead, text) => {
  const tools = parse(text)
  const drops = tools.filter((t) => t.drop).length
  return { lead, tools, width: Math.round(((tools.length - drops) * 273 + drops * 375) / 10) }
}

const toolbars = [
  [
    group('grip', 'new New Project|open Open Project|save Save Project|layout New Print Layout|manager Layout Manager|style Style Manager'),
    group('grip', 'hand:p Pan Map|pan Pan to Selection|zin Zoom In|zout Zoom Out|full Zoom Full|zsel Zoom to Selection|zlay Zoom to Layer|znat:x Zoom to Native Resolution|zlast Zoom Last|znext:x Zoom Next|map New Map View|map3d New 3D Map View|bookmark New Spatial Bookmark|bookmarks Show Spatial Bookmarks|clock Temporal Controller|refresh Refresh'),
    group('grip', 'info Identify Features|abacus Field Calculator|gear:p Toolbox|sigma Statistical Summary|table:d Attribute Table|ruler:d Measure|tip Map Tips|actions:dx Run Action'),
  ],
  [
    group('grip', 'source Data Source Manager|gpkg New GeoPackage Layer|shape New Shapefile Layer|spatial New SpatiaLite Layer|memory New Scratch Layer|mesh New Mesh Layer|virtual New Virtual Layer'),
    group('grip', 'pencils:x Current Edits|pencil:x Toggle Editing|saveEdit:x Save Edits|points:x Add Feature|vertex:dx Vertex Tool|modify:x Modify Attributes|trash:x Delete Selected|cut:x Cut Features|copy:x Copy Features|paste:x Paste Features|undo:x Undo|redo:x Redo'),
    group('grip', 'label Layer Labeling|diagram Layer Diagram'),
    group('sep', 'pinLabel Highlight Pinned Labels|redLabel Unplaced Labels'),
    group('sep', 'fl1:x Pin Labels|fl2:x Show Labels|fl3:x Move Label|fl4:x Rotate Label|fl5:x Change Label'),
    group('grip', 'web1 Add Web Layer|web2 Search Web Layers|bino MetaSearch'),
    group('grip', 'python Python Console|leaf Plugin Layers'),
    group('grip', 'help Help Contents'),
    group('grip', 'ellipse Ellipse Tool'),
  ],
  [
    group('grip', 'select:d Select Features|rows:d Select by Value|deselect:d Deselect|selLoc Select by Location'),
    group('grip', 'e1:x Edit Mesh|e2:dx Select Mesh Elements|e3:x Transform Vertices|e4:dx Force by Lines'),
    group('grip', 'anno:d New Annotation Layer|selAnno Modify Annotations|poly Polygon Annotation|line Line Annotation|starPlus Marker Annotation|textPlus Text Annotation'),
    group('sep', 'balloon:d Text Balloon'),
  ],
]

// An underscore marks the accelerator letter that follows it.
const menus = 'Pro_ject,_Edit,_View,_Layer,_Settings,_Plugins,Vect_or,_Raster,_Database,_Web,_Mesh,MMQGIS,Pro_cessing,_Help'
  .split(',')
  .map((m) => {
    const at = m.indexOf('_')
    return at < 0 ? [m, '', ''] : [m.slice(0, at), m[at + 1], m.slice(at + 2)]
  })

const browserTools = parse('addLayer Add Selected Layers|refresh Refresh|filter Filter Browser|collapse Collapse All|infoOnly Properties')
const layerTools = parse('brush Layer Styling|group Add Group|eye Map Themes|filterDrop Filter Legend|eps:d Filter by Expression|expand Expand All|collapse Collapse All|remove Remove Layer')
const toolboxTools = [parse('models Models|scripts Scripts|clock History|results:p Results Viewer'), parse('editIn Edit in Place'), parse('wrench Options')]

const browser = [
  ['fav', 'Favorites'], ['bookmarks', 'Spatial Bookmarks', 1], ['home', 'Home', 1], ['folder', 'C:\\', 1],
  ['folder', 'E:\\ (New Volume)', 1], ['box', 'GeoPackage'], ['feather', 'SpatiaLite'], ['pg', 'PostgreSQL'],
  ['sap', 'SAP HANA'], ['ms', 'MS SQL Server'], ['oracle', 'Oracle'], ['wms', 'WMS/WMTS'], ['vt', 'Vector Tiles'],
  ['xyz', 'XYZ Tiles', 1], ['wcs', 'WCS'], ['wfs', 'WFS / OGC API - Features'], ['arc', 'ArcGIS REST Servers'], ['geonode', 'GeoNode'],
]
const categories = ['Network analysis', 'Plots', 'Raster analysis', 'Raster creation', 'Raster terrain analysis', 'Raster tools', 'Vector analysis', 'Vector creation']
const algorithms = [
  'Assign projection', 'Batch Nominatim geocoder', 'Convert layer to spatial bookm...', 'Convert spatial bookmarks to l...',
  'Create attribute index', 'Create spatial index', 'Define Shapefile projection', 'Delete duplicate geometries',
  'Delete duplicates by attribute', 'Detect dataset changes', 'Drop geometries', 'Execute SQL',
]
const results = ['Statistics [07:05:42PM]', 'Statistics [07:02:46PM]']

const query = ref('')
const layerOn = ref(true)
const selected = ref('Vector general')

const pairs = (text, ox, oy, k) =>
  text.trim().split(/\s+/).map((p) => {
    const [x, y] = p.split(',').map(Number)
    return [ox + x / k, oy + y / k]
  })
const north = `641,50 656,48 671,45 641,70 645,66 658,74 655,66 694,84 671,93 607,101 624,99 641,98 718,105 711,111 729,113 722,108 776,108 738,138 643,115 663,112 668,114 655,118 654,135 649,149 643,163 668,166 686,159 676,172 696,168 721,173 748,181 629,196 676,213 713,248 726,262 467,108 512,118 557,110 537,128 577,140 474,131 479,133 452,144 440,158 475,160 527,156 529,166 545,170 585,208 605,206 609,218 584,181 600,185 612,127 606,140 600,153 596,163 603,101 612,116 609,133 602,147 598,158 592,180
651,283 631,299 671,315 751,337 654,352 609,276 605,285 575,270 606,297 530,387 532,394 820,430 651,447 669,487 708,509 713,554 761,532 783,571 1154,572 743,611 793,633
385,196 382,212 378,217 360,234 372,236 351,250 360,253 400,182 408,187 418,182 410,195 403,185 421,185 331,275 343,277 350,285 360,295 333,303 335,312 355,312 355,325 345,340 350,350 340,340 335,345 345,322 305,320 313,322 297,327 288,337 325,318 275,361 285,365 303,367 315,360 320,365 335,365 360,382
285,393 270,411 262,417 247,419 232,437 238,444 247,444 211,444 375,405 370,412 378,410 368,405 372,418 385,280 395,270 388,290 400,280 392,285 387,298 405,275 415,272
223,497 181,502 177,501 186,503 181,510 365,496 357,501 370,505 373,508 390,509 430,517 158,532 153,558 160,558 166,564 186,554 203,579 208,579 218,579 131,591 136,589 158,601 176,606 196,609 136,624 370,546 365,551 325,553 315,565 328,567 340,566 322,560 326,581 330,575 452,568 278,611 288,606 283,610 350,609 285,630
551,554 577,541 579,546 565,567 596,562 616,551 658,549 631,579 534,591 540,606 555,595 571,604 567,617 587,591 609,594 612,600 637,600 612,626 639,628 658,617 550,605 565,608
498,173 510,180 515,187 505,190 450,187 460,180 467,178 475,187 452,195 550,255 545,225 545,215 535,220 528,215 555,300 565,295 560,305 570,300 559,315 563,290 580,287 592,286 600,290 575,340 585,345 595,353 605,350 613,340 608,328 598,315 592,325 580,330 600,335 590,335 515,322 520,335 527,347 529,357 523,340 490,355 497,355`
const south = `157,46 144,76 137,117 139,115 114,131 87,135 92,144 176,116 198,55 193,66 215,64 208,75 223,88 213,80 205,72 196,97 196,108 258,93 298,63 373,69 350,91 264,116 283,118 251,128 261,138 310,120 328,118 340,112 335,122 457,123 455,148 457,160 472,163 428,166 450,183 445,195 522,69 768,58 731,113 639,171 652,173 629,199 661,226 681,258 766,278 699,325 779,146 779,198 845,110
350,132 380,140 390,140 365,143 393,145 187,158 200,158 213,165 208,175 228,175 230,180 200,180 203,190 222,180 200,170 112,218 105,235 115,238 123,243 132,258 104,242 112,243 170,215 177,210 185,213 193,217 208,215 192,233 206,250 237,211 200,213 238,242 247,243 262,238 265,222 279,190 278,195 270,295 325,285 350,285
81,335 52,357 57,359 95,343 92,350 102,350 100,343 104,368 141,368 181,347 69,405 129,430 99,437 169,432 201,487 236,487 191,532 134,570 141,575 134,577 189,572 208,592 169,587 164,596 169,592 243,365 330,402 355,405 375,403 398,410 383,410 363,420 385,440 390,460 405,469 465,462 340,514 341,520 360,532 350,552
470,345 508,345 525,350 555,345 548,345 477,392 488,392 500,380 485,370 500,366 518,387 528,384 537,392 460,375 450,355 540,215 570,205 579,213 597,226 560,218 400,388 415,387 395,390 410,380 420,372 435,372 445,368 455,375 440,365 450,358 470,360 480,355 490,375 405,385 430,365
325,368 345,365 362,360 350,355 320,380 480,330 495,325 505,330 490,335 500,320 485,340 412,332 380,345 390,345 395,350 598,270 610,265 598,285 605,255 540,305 545,310 548,298 540,318
801,150 801,165 801,180 820,143 825,140 845,133 850,158 863,158 815,172 825,177 835,175 855,168 863,172 845,155 840,165 850,180 813,206 835,198 827,200 850,212 853,223 816,245 860,245 873,236 887,168 895,137 895,146 870,193 880,193 887,207 890,213 918,205 918,213 910,230 910,238 853,215 845,205
940,112 948,110 958,110 965,111 972,81 984,121 975,136 935,144 935,158 957,160 995,153 1000,158 1000,183 975,178 962,190 968,185 1067,83 1052,108 1037,113 1027,135 1030,132 1057,126 1075,121 1077,124 1067,146 1077,158 1070,213 1045,243 1065,268 1017,268 995,272 1002,295 1032,295 967,322 972,240 983,232 990,226 992,208 981,258 970,263 950,260 945,283 953,293 957,275 965,270 955,285 943,287 1017,31 1035,46
779,541 784,549 796,547 802,541 790,545 825,513 832,520 841,511 830,530 843,532 838,527 875,511 882,520 868,530 881,538 878,527 883,523 915,527 927,517 922,520 930,519 955,507 962,515 955,517 972,527 980,515 991,512 1000,527 1025,507 1028,517 1005,497 995,490 970,482 980,478 985,468 991,467 1000,469 983,482 975,485 978,470`
const west = `433,620 444,626 449,625 452,628 445,631 448,628 443,629 477,626 482,628 480,625 491,626 495,625 501,624 495,630 497,628 483,667 494,668 535,619 536,629 540,640 541,650 539,652 542,642 534,657 548,669 555,671 559,670 534,686`

// Crowded neighbourhoods: outline in the same units as the lists above, with the number of incidents in it.
const crowds = [
  [590, 300, 45, '448,185 515,182 545,215 552,258 530,290 500,265 470,215 455,222'],
  [590, 300, 45, '400,235 415,222 440,228 470,225 485,245 475,270 445,275 425,275'],
  [590, 300, 105, '400,315 440,298 490,290 535,290 520,325 480,345 468,372 430,390 390,385 376,355'],
  [590, 300, 20, '440,275 480,270 500,290 470,310 450,300'],
  [590, 300, 70, '285,362 350,370 365,400 355,430 325,475 305,445 300,400 285,395'],
  [590, 500, 16, '330,125 350,128 355,158 335,158'],
  [590, 500, 80, '297,158 360,155 385,190 370,230 350,255 300,262 268,265 270,240 305,215'],
  [590, 500, 160, '350,225 400,190 452,212 460,260 490,290 470,320 430,325 395,305 360,290 355,255'],
  [590, 500, 95, '455,262 490,228 545,225 590,245 605,268 560,275 545,310 500,300 465,300'],
  [590, 500, 50, '262,325 300,290 325,310 295,345 322,372 310,388 280,385 258,368'],
  [590, 500, 18, '350,312 400,315 405,345 365,330'],
]
let seed = 7
const random = () => (seed = (seed * 16807) % 2147483647) / 2147483647
const inside = (poly, x, y) => {
  let hit = false
  for (let i = 0, j = poly.length - 1; i < poly.length; j = i++) {
    const [a, b] = poly[i]
    const [c, d] = poly[j]
    if (b > y !== d > y && x < ((c - a) * (y - b)) / (d - b) + a) hit = !hit
  }
  return hit
}
const scatter = ([ox, oy, count, outline]) => {
  const poly = pairs(outline, ox, oy, 3)
  const xs = poly.map((p) => p[0])
  const ys = poly.map((p) => p[1])
  const out = []
  while (out.length < count) {
    const x = Math.min(...xs) + random() * (Math.max(...xs) - Math.min(...xs))
    const y = Math.min(...ys) + random() * (Math.max(...ys) - Math.min(...ys))
    if (inside(poly, x, y)) out.push([x, y])
  }
  return out
}
const incidents = [...crowds.flatMap(scatter), ...pairs(north, 590, 300, 3), ...pairs(south, 590, 500, 3), ...pairs(west, 0, 0, 1)]
const circle = 'm-3 0a3 3 0 1 0 6 0a3 3 0 1 0-6 0'
const dots = incidents.map(([x, y]) => `M${x.toFixed(1)} ${y.toFixed(1)}${circle}`)
</script>

<template>
  <div class="window">
    <header class="title">
      <svg class="i13" viewBox="0 0 20 20" v-html="icons.qgis"></svg>
      <h1>*Untitled Project — QGIS</h1>
      <div class="controls">
        <button aria-label="Minimize"><svg viewBox="0 0 10 10"><path d="M1 5.500h8" /></svg></button>
        <button aria-label="Restore"><svg viewBox="0 0 10 10"><path d="M1.500 3.500h5v5.500h-5zM3.500 3V1h5v6H7" /></svg></button>
        <button aria-label="Close"><svg viewBox="0 0 10 10"><path d="M1 1l8 8M9 1L1 9" /></svg></button>
      </div>
    </header>

    <nav class="menu" aria-label="Menu">
      <button v-for="m in menus" :key="m.join('')">{{ m[0] }}<u v-if="m[1]">{{ m[1] }}</u>{{ m[2] }}</button>
    </nav>

    <div v-for="(bar, n) in toolbars" :key="n" class="toolbar" role="toolbar">
      <template v-for="(g, k) in bar" :key="k">
        <span :class="g.lead"></span>
        <div class="tools" :style="{ width: g.width + 'px' }">
          <button v-for="t in g.tools" :key="t.label" class="tool" :class="{ drop: t.drop, on: t.on }" :disabled="t.off" :aria-label="t.label">
            <span class="face"><svg class="i19" viewBox="0 0 20 20" v-html="icons[t.icon]"></svg></span>
            <i v-if="t.drop" class="arrow"></i>
          </button>
        </div>
      </template>
    </div>

    <div class="body">
      <aside class="dock">
        <section class="browser">
          <header class="head"><h2>Browser</h2><button class="float" aria-label="Float Browser"></button><button class="shut" aria-label="Close Browser"></button></header>
          <div class="mini">
            <button v-for="t in browserTools" :key="t.label" :aria-label="t.label"><svg class="i13" viewBox="0 0 20 20" v-html="icons[t.icon]"></svg></button>
          </div>
          <ul class="tree">
            <li v-for="b in browser" :key="b[1]">
              <button v-if="b[2]" class="twist" :aria-label="'Expand ' + b[1]"></button><span v-else class="twist blank"></span>
              <svg class="i13" viewBox="0 0 20 20" v-html="icons[b[0]]"></svg><span>{{ b[1] }}</span>
            </li>
          </ul>
        </section>
        <div class="split"></div>
        <section class="layers">
          <header class="head"><h2>Layers</h2><button class="float" aria-label="Float Layers"></button><button class="shut" aria-label="Close Layers"></button></header>
          <div class="mini">
            <button v-for="t in layerTools" :key="t.label" :class="{ wide: t.drop }" :aria-label="t.label">
              <svg class="i13" viewBox="0 0 20 20" v-html="icons[t.icon]"></svg><i v-if="t.drop" class="arrow"></i>
            </button>
          </div>
          <div class="tree">
            <label class="layer">
              <input v-model="layerOn" type="checkbox" /><span class="symbol"></span><b>NYPD_Shooting_Incident_Data_2020</b>
            </label>
          </div>
          <div class="hbar"><button class="left" aria-label="Scroll left"></button><span></span><button class="right" aria-label="Scroll right"></button></div>
        </section>
      </aside>

      <main class="canvas">
        <div class="message" role="status">
          <svg class="i19" viewBox="0 0 20 20" v-html="icons.check"></svg>
          <p><b>Layer Exported:</b> Successfully saved raster layer to <a href="#">C:\Users\jxa421\Downloads\ohio_2019_pm2.5.tif</a></p>
          <em>2 more</em>
          <button aria-label="Close message"><svg class="i14" viewBox="0 0 20 20" v-html="icons.close"></svg></button>
          <i class="arrow"></i>
        </div>
        <svg v-show="layerOn" class="map" viewBox="228 157 1146 781" role="img" aria-label="Incident map">
          <path v-for="(d, i) in dots" :key="i" :d="d" />
        </svg>
      </main>

      <aside class="dock">
        <section class="toolbox">
          <header class="head"><h2>Processing Toolbox</h2><button class="float" aria-label="Float Toolbox"></button><button class="shut" aria-label="Close Toolbox"></button></header>
          <div class="mini">
            <template v-for="(g, k) in toolboxTools" :key="k">
              <span v-if="k" class="sep"></span>
              <button v-for="t in g" :key="t.label" :class="{ on: t.on }" :aria-label="t.label"><svg class="i13" viewBox="0 0 20 20" v-html="icons[t.icon]"></svg></button>
            </template>
          </div>
          <label class="search"><svg class="i12" viewBox="0 0 20 20" v-html="icons.search"></svg><input v-model="query" type="text" placeholder="Search…" aria-label="Search" /></label>
          <div class="scroller">
            <ul class="tree algs">
              <li v-for="c in categories" :key="c"><button class="twist" :aria-label="'Expand ' + c"></button><svg class="i13" viewBox="0 0 20 20" v-html="icons.qgis"></svg><span>{{ c }}</span></li>
              <li class="picked"><button class="twist open" aria-label="Collapse Vector general"></button><svg class="i13" viewBox="0 0 20 20" v-html="icons.qgis"></svg><span>{{ selected }}</span></li>
              <li v-for="a in algorithms" :key="a" class="child"><svg class="i13" viewBox="0 0 20 20" v-html="a.startsWith('Convert') ? icons.bookmarks : icons.algo"></svg><span>{{ a }}</span></li>
            </ul>
            <div class="vbar"><button class="up" aria-label="Scroll up"></button><span class="before"></span><span class="thumb"></span><span class="after"></span><button class="down" aria-label="Scroll down"></button></div>
          </div>
        </section>
        <div class="split"></div>
        <section class="viewer">
          <header class="head"><h2>Results Viewer</h2><button class="float" aria-label="Float Results"></button><button class="shut" aria-label="Close Results"></button></header>
          <ul class="tree results">
            <li v-for="r in results" :key="r"><svg class="i13" viewBox="0 0 20 20" v-html="icons.algo"></svg><span>{{ r }}</span></li>
          </ul>
        </section>
        <div class="split"></div>
        <section class="info">
          <p><b>Algorithm:</b> Statistics</p>
          <p><b>File path:</b> <a href="#">C:<br />\Users\jxa421\AppData\Local\Temp\processing_n<br />QxDmm\b60b6b5b0bdc4201ab1037901c8719e1\O<br />UTPUT_HTML_FILE.html</a></p>
        </section>
      </aside>
    </div>

    <footer class="status"><span class="locator"></span><span class="coord"></span><span class="scale"></span><span class="scale far"></span><span class="scale"></span></footer>
  </div>
</template>

<style>
body { overflow: hidden; }
</style>

<style scoped>
.window { display: flex; flex-direction: column; height: 100vh; background: #f0f0f0; color: #111; font: 10px/15px Lato, "Open Sans", sans-serif; }
* { box-sizing: border-box; }
button { padding: 0; border: 0; background: none; color: inherit; font: inherit; }
h1, h2, p, ul { margin: 0; padding: 0; font: inherit; list-style: none; }
svg { display: block; flex: none; }
.i12 { width: 12px; height: 12px; }
.i13 { width: 13px; height: 13px; }
.i14 { width: 14px; height: 14px; }
.i19 { width: 19px; height: 19px; }
.arrow { flex: none; width: 0; border: 3px solid transparent; border-top: 4px solid #444; border-bottom: 0; }

.title { display: flex; align-items: center; gap: 4px; height: 18px; padding-left: 2px; background: #fff; }
.controls { display: flex; margin-left: auto; }
.controls button { display: grid; place-items: center; width: 38px; }
.controls svg { width: 10px; height: 10px; fill: none; stroke: #222; }

.menu { display: flex; gap: 11px; height: 16px; padding-left: 8px; }

.toolbar { display: flex; align-items: stretch; height: 33px; border-top: 1px solid #d2d2d2; border-bottom: 1px solid #c8c8c8; background: linear-gradient(#fbfbfb, #ededed); }
.toolbar:nth-of-type(3) { height: 31px; }
.tools { display: flex; align-items: center; }
.grip { width: 10px; margin-left: 4px; background: radial-gradient(circle, #b4b4b4 1px, transparent 1px) 4px 8px / 3px 3px; background-clip: content-box; padding: 8px 3px; }
.grip:first-child { margin-left: 0; }
.sep { width: 6px; margin: 8px 0; background: linear-gradient(#ccc, #ccc) center / 1px 100% no-repeat; }
.tool { display: flex; align-items: center; flex: 27 1 0; min-width: 0; }
.tool.drop { flex-grow: 37; }
.face { display: grid; place-items: center; width: 26px; height: 26px; flex: none; border: 1px solid transparent; border-radius: 2px; }
.tool.on .face { border-color: #a8a8a8; background: #d6d6d6; }
.tool .arrow { margin-left: 2px; }
.tool:disabled { opacity: .5; filter: grayscale(.8); }

.body { display: grid; grid-template-columns: 222px minmax(0, 1fr) 212px; gap: 5px; flex: 1; min-height: 0; }
.dock { display: flex; flex-direction: column; min-width: 0; min-height: 0; }
.dock section { display: flex; flex-direction: column; min-height: 0; flex-basis: 0; overflow: hidden; }
.browser { flex-grow: 419; }
.layers { flex-grow: 385; }
.toolbox { flex-grow: 377; }
.viewer { flex-grow: 223; }
.info { flex-grow: 200; }
.head { display: flex; align-items: center; gap: 3px; height: 17px; flex: none; padding: 0 2px 0 3px; }
.head h2 { margin-right: auto; }
.head button { position: relative; width: 10px; height: 10px; border: 1px solid #777; border-radius: 2px; }
.float { background: linear-gradient(#888, #888) center / 4px 4px no-repeat; }
.shut { background: linear-gradient(45deg, transparent 42%, #444 42% 58%, transparent 58%), linear-gradient(-45deg, transparent 42%, #444 42% 58%, transparent 58%); }
.mini { display: flex; align-items: center; height: 25px; flex: none; padding-left: 3px; }
.mini button { display: flex; align-items: center; justify-content: center; gap: 4px; width: 21px; height: 19px; flex: none; border: 1px solid transparent; border-radius: 2px; }
.mini .wide { width: 31px; }
.mini .on { border-color: #a8a8a8; background: #dcdcdc; }
.split { height: 4px; flex: none; background: radial-gradient(circle, #bbb 1px, transparent 1px) center / 3px 3px repeat-x content-box; padding: 0 104px; }

.tree { flex: 1; min-height: 0; overflow: hidden; border: 1px solid #bdbdbd; background: #fff; }
.tree li { display: flex; align-items: center; gap: 4px; height: 15px; padding-left: 2px; white-space: nowrap; }
.twist { position: relative; width: 10px; height: 15px; flex: none; }
.twist::before { content: ""; display: block; margin: 0 3px; border: 4px solid transparent; border-left-color: #555; border-right: 0; width: 0; }
.twist.open::before { border: 4px solid transparent; border-top-color: #111; border-bottom: 0; margin: 0 1px; }
.twist.blank { visibility: hidden; }

.layer { display: flex; align-items: center; height: 15px; padding-left: 20px; background: #f0f0f0; white-space: nowrap; }
.layer input { appearance: none; display: grid; place-items: center; width: 11px; height: 11px; margin: 0; flex: none; border: 1px solid #bbb; background: #fff; }
.layer input:checked::before { content: ""; width: 3px; height: 6px; border: solid #111; border-width: 0 2px 2px 0; transform: rotate(40deg); }
.symbol { width: 6px; height: 6px; margin: 0 9px 0 8px; flex: none; border: 1px solid #6c3033; border-radius: 50%; background: #b9474b; }
.layer b { text-decoration: underline; }
.hbar { display: flex; height: 13px; flex: none; border: 1px solid #bdbdbd; border-top: 0; background: linear-gradient(#f4f4f4, #fff); }
.hbar span { flex: 1; margin-right: 3px; border: solid #c4c4c4; border-width: 0 1px; }
.hbar button { display: grid; place-items: center; width: 11px; }
.hbar button::before { content: ""; border: 3px solid transparent; }
.hbar .left::before { border-right: 4px solid #444; border-left: 0; }
.hbar .right { border-left: 1px solid #c4c4c4; }
.hbar .right::before { border-left: 4px solid #444; border-right: 0; }

.canvas { display: flex; flex-direction: column; min-width: 0; margin-top: 1px; border: 1px solid #b4b4b4; background: #fff; }
.message { display: flex; align-items: center; height: 25px; flex: none; margin: -1px -1px 0; padding: 0 8px; border: 1px solid #93ad8c; background: #dff0d8; font: 9px/15px "DejaVu Sans Condensed", "Open Sans", sans-serif; white-space: nowrap; }
.message p { margin: 0 auto 0 8px; padding-top: 2px; }
.message a { color: #3c9a22; }
.message em { margin-right: 15px; padding-top: 2px; font: italic 10px/15px Lato, "Open Sans", sans-serif; }
.message .arrow { margin-left: 4px; }
.map { flex: 1; min-height: 0; width: 100%; fill: #b9474b; stroke: #33282a; stroke-width: 1; }

.search { display: flex; align-items: center; gap: 5px; height: 18px; flex: none; margin-bottom: 1px; padding-left: 7px; border: 1px solid #b8b8b8; border-radius: 2px; background: #fff; }
.search input { flex: 1; min-width: 0; padding: 0; border: 0; outline: 0; background: none; font: inherit; }
.search input::placeholder { color: #a4a4a4; font-style: italic; }
.scroller { display: flex; flex: 1; min-height: 0; border: 1px solid #bdbdbd; background: #fff; }
.scroller .tree { border: 0; }
.algs li { gap: 5px; padding-left: 4px; }
.results li { padding-left: 4px; }
.algs li.child { padding-left: 36px; }
.algs .picked { background: #0078d7; color: #fff; }
.vbar { display: flex; flex-direction: column; width: 11px; flex: none; border-left: 1px solid #c8c8c8; background: #e6e6e6; }
.vbar button { display: grid; place-items: center; height: 11px; background: #fafafa; }
.vbar button::before { content: ""; border: 3px solid transparent; }
.vbar .up::before { border-bottom: 4px solid #444; border-top: 0; }
.vbar .down::before { border-top: 4px solid #444; border-bottom: 0; }
.before { flex: 58; border-top: 1px solid #c8c8c8; }
.thumb { flex: 96; border: solid #c8c8c8; border-width: 1px 0; background: #fcfcfc; }
.after { flex: 136; }
.results li:nth-child(even) { background: #f0f0f0; }
.info { padding: 3px 3px 0; border: 1px solid #bdbdbd; background: #fff; font: 9px/11px "Liberation Sans", Arial, sans-serif; white-space: nowrap; }
.info a { color: #0000f0; }

.status { display: flex; height: 4px; flex: none; padding: 2px 160px 0 4px; }
.status span { border: 1px solid #b8b8b8; border-bottom: 0; background: #e8e8e8; }
.locator { width: 164px; margin-right: auto; }
.coord { width: 84px; }
.status .scale { width: 66px; margin-left: 52px; }
.status .far { margin-left: 68px; }
</style>
